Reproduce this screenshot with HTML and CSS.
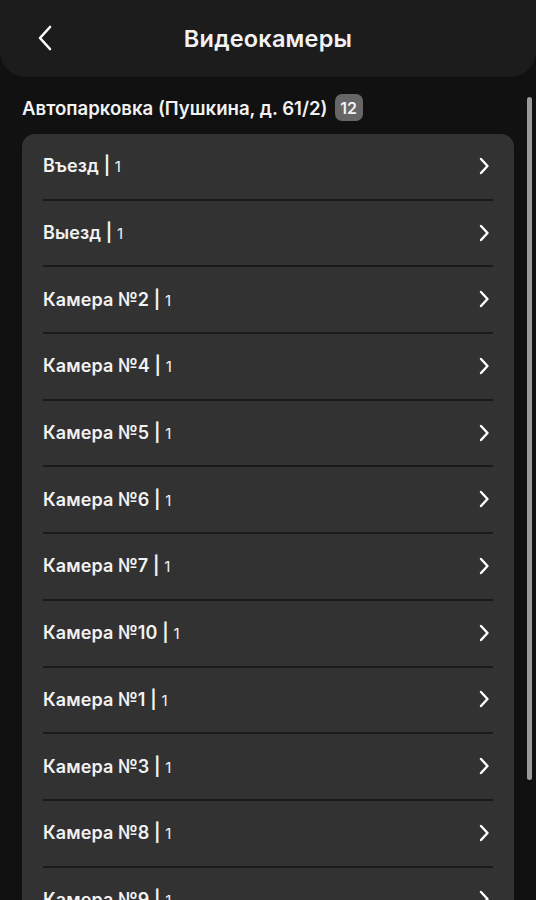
FILE: index.html
```html
<!DOCTYPE html>
<html lang="ru">
<head>
<meta charset="utf-8">
<link rel="stylesheet" href="styles.css">
</head>
<body>
<header class="topbar">
  <svg class="back" width="16" height="26" viewBox="0 0 16 26"><path d="M13 2 L3 13 L13 24" fill="none" stroke="#fff" stroke-width="2.6" stroke-linecap="round" stroke-linejoin="round"/></svg>
  <h1 class="title">Видеокамеры</h1>
</header>
<main class="content">
  <div class="section-head">
    <span class="section-title">Автопарковка (Пушкина, д. 61/2)</span>
    <span class="badge">12</span>
  </div>
  <ul class="list">
    <li class="row"><span class="name">Въезд <b>|</b> <small>1</small></span><svg class="chev" viewBox="0 0 12 20"><path d="M3 3 L9.5 10 L3 17" fill="none" stroke="#fff" stroke-width="2.4" stroke-linecap="round" stroke-linejoin="round"/></svg></li>
    <li class="row"><span class="name">Выезд <b>|</b> <small>1</small></span><svg class="chev" viewBox="0 0 12 20"><path d="M3 3 L9.5 10 L3 17" fill="none" stroke="#fff" stroke-width="2.4" stroke-linecap="round" stroke-linejoin="round"/></svg></li>
    <li class="row"><span class="name">Камера №2 <b>|</b> <small>1</small></span><svg class="chev" viewBox="0 0 12 20"><path d="M3 3 L9.5 10 L3 17" fill="none" stroke="#fff" stroke-width="2.4" stroke-linecap="round" stroke-linejoin="round"/></svg></li>
    <li class="row"><span class="name">Камера №4 <b>|</b> <small>1</small></span><svg class="chev" viewBox="0 0 12 20"><path d="M3 3 L9.5 10 L3 17" fill="none" stroke="#fff" stroke-width="2.4" stroke-linecap="round" stroke-linejoin="round"/></svg></li>
    <li class="row"><span class="name">Камера №5 <b>|</b> <small>1</small></span><svg class="chev" viewBox="0 0 12 20"><path d="M3 3 L9.5 10 L3 17" fill="none" stroke="#fff" stroke-width="2.4" stroke-linecap="round" stroke-linejoin="round"/></svg></li>
    <li class="row"><span class="name">Камера №6 <b>|</b> <small>1</small></span><svg class="chev" viewBox="0 0 12 20"><path d="M3 3 L9.5 10 L3 17" fill="none" stroke="#fff" stroke-width="2.4" stroke-linecap="round" stroke-linejoin="round"/></svg></li>
    <li class="row"><span class="name">Камера №7 <b>|</b> <small>1</small></span><svg class="chev" viewBox="0 0 12 20"><path d="M3 3 L9.5 10 L3 17" fill="none" stroke="#fff" stroke-width="2.4" stroke-linecap="round" stroke-linejoin="round"/></svg></li>
    <li class="row"><span class="name">Камера №10 <b>|</b> <small>1</small></span><svg class="chev" viewBox="0 0 12 20"><path d="M3 3 L9.5 10 L3 17" fill="none" stroke="#fff" stroke-width="2.4" stroke-linecap="round" stroke-linejoin="round"/></svg></li>
    <li class="row"><span class="name">Камера №1 <b>|</b> <small>1</small></span><svg class="chev" viewBox="0 0 12 20"><path d="M3 3 L9.5 10 L3 17" fill="none" stroke="#fff" stroke-width="2.4" stroke-linecap="round" stroke-linejoin="round"/></svg></li>
    <li class="row"><span class="name">Камера №3 <b>|</b> <small>1</small></span><svg class="chev" viewBox="0 0 12 20"><path d="M3 3 L9.5 10 L3 17" fill="none" stroke="#fff" stroke-width="2.4" stroke-linecap="round" stroke-linejoin="round"/></svg></li>
    <li class="row"><span class="name">Камера №8 <b>|</b> <small>1</small></span><svg class="chev" viewBox="0 0 12 20"><path d="M3 3 L9.5 10 L3 17" fill="none" stroke="#fff" stroke-width="2.4" stroke-linecap="round" stroke-linejoin="round"/></svg></li>
    <li class="row"><span class="name">Камера №9 <b>|</b> <small>1</small></span><svg class="chev" viewBox="0 0 12 20"><path d="M3 3 L9.5 10 L3 17" fill="none" stroke="#fff" stroke-width="2.4" stroke-linecap="round" stroke-linejoin="round"/></svg></li>
  </ul>
  <div class="scrollbar"></div>
</main>
</body>
</html>
```
FILE: styles.css
```css
* { box-sizing: border-box; }
html, body {
  margin: 0;
  padding: 0;
  height: 900px;
  overflow: hidden;
  background: #111111;
  color: #f2f2f2;
  font-family: Inter, "Noto Sans", sans-serif;
}
.topbar {
  height: 77px;
  background: #1c1c1c;
  border-radius: 0 0 26px 26px;
  display: flex;
  align-items: center;
  justify-content: center;
  position: relative;
}
.back {
  position: absolute;
  left: 37px;
  top: 25px;
}
.title {
  margin: 0;
  font-size: 23.5px;
  font-weight: 600;
  letter-spacing: 0.2px;
}
.content {
  position: relative;
  padding: 16px 22px 0 22px;
}
.section-head {
  display: flex;
  align-items: center;
  gap: 7px;
  height: 29px;
}
.section-title {
  font-size: 18.6px;
  font-weight: 600;
}
.badge {
  background: #666666;
  border-radius: 7px;
  font-size: 16px;
  font-weight: 600;
  height: 27px;
  min-width: 28px;
  padding: 0 5px;
  display: flex;
  align-items: center;
  justify-content: center;
}
.list {
  list-style: none;
  margin: 12px 0 0 0;
  padding: 0 21px;
  background: #323232;
  border-radius: 13px;
}
.row {
  height: 66.7px;
  display: flex;
  align-items: center;
  justify-content: space-between;
  border-bottom: 2px solid #1a1a1a;
  padding-bottom: 1px;
}
.name {
  font-size: 18px;
  font-weight: 600;
  letter-spacing: 0.1px;
}
.name b {
  font-weight: 600;
}
.name small {
  font-size: 15px;
  font-weight: 400;
}
.chev {
  width: 12px;
  height: 20px;
  margin-right: 3px;
}
.scrollbar {
  position: absolute;
  right: 4px;
  top: 20px;
  width: 5px;
  height: 683px;
  border-radius: 3px;
  background: #9a9a9a;
}
```
